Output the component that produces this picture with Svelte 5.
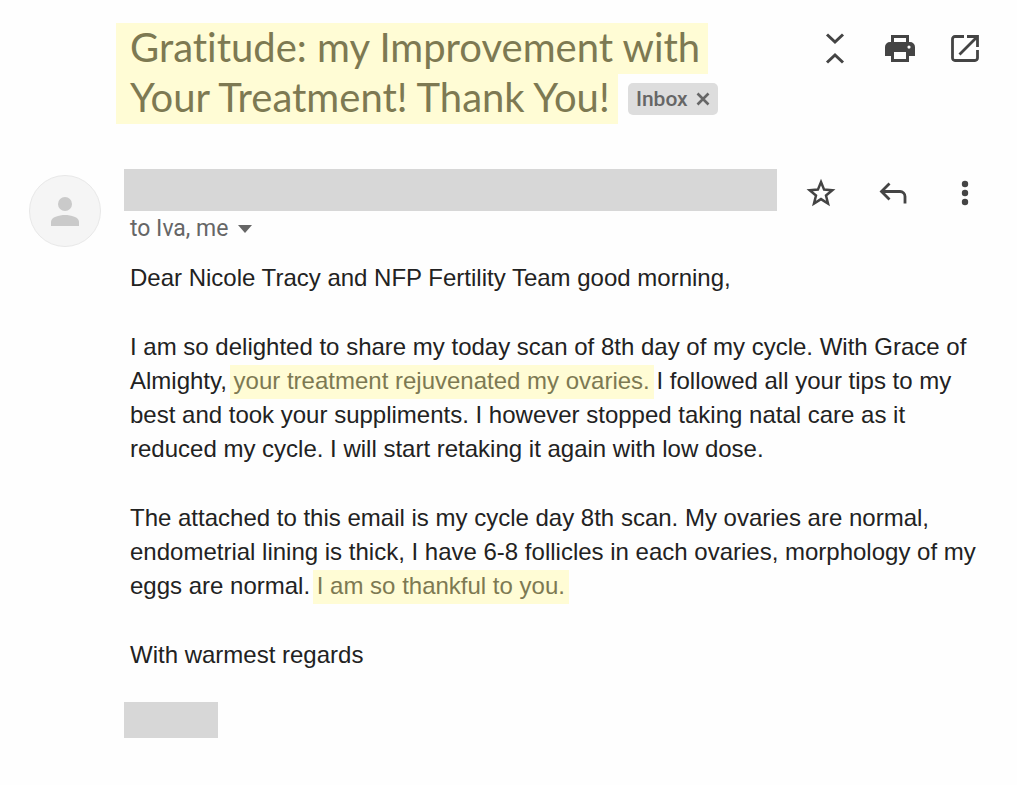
<script>
  let labelled = $state(true);
  let starred = $state(false);
</script>

<main class="mail">
  <header class="subject">
    <h1>
      <span class="mark title">Gratitude: my Improvement with Your Treatment! Thank You!</span>
      {#if labelled}
        <span class="label">Inbox
          <button type="button" aria-label="Remove Inbox label" onclick={() => (labelled = false)}>
            <svg width="14" height="14" viewBox="0 0 14 14"><path d="M1.500 1.500l11 11M12.500 1.500l-11 11" stroke="currentColor" stroke-width="2.600" /></svg>
          </button>
        </span>
      {/if}
    </h1>
    <div class="tools top">
      <button type="button" aria-label="Collapse all">
        <svg width="32" height="32" viewBox="0 0 32 32" fill="none" stroke="currentColor" stroke-width="3"><path d="M8 2.500l8 7.500 8-7.500M8 30.500l8-7.500 8 7.500" /></svg>
      </button>
      <button type="button" aria-label="Print">
        <svg width="32" height="32" viewBox="0 0 32 32">
          <path fill="currentColor" fill-rule="evenodd" d="M7 3h18v7h1a5 5 0 0 1 5 5v9h-6v6H7v-6H1v-9a5 5 0 0 1 5-5h1zM10 6v4h12V6zM10 20v7h12v-7zM25 13.500a1.600 1.600 0 1 0 0 3.200 1.600 1.600 0 0 0 0-3.200z" />
        </svg>
      </button>
      <button type="button" aria-label="Open in new window">
        <svg width="32" height="32" viewBox="0 0 32 32" fill="none" stroke="currentColor" stroke-width="2.800">
          <path d="M15 4.500H6A2.500 2.500 0 0 0 3.500 7v19A2.500 2.500 0 0 0 6 28.500h20a2.500 2.500 0 0 0 2.500-2.500v-8M18 4.500h10.500V15M28 5L10.500 22.500" />
        </svg>
      </button>
    </div>
  </header>

  <article class="message">
    <div class="avatar">
      <svg width="30" height="34" viewBox="0 0 30 34" fill="#cacaca" aria-hidden="true">
        <circle cx="15" cy="10" r="7" />
        <path d="M1 32v-4C1 23 9 21 15 21s14 2 14 7v4z" />
      </svg>
    </div>
    <div class="content">
      <div class="sender">
        <div class="who">
          <div class="redacted name"></div>
          <button type="button" class="recipients">to Iva, me
            <svg width="14" height="8" viewBox="0 0 14 8" aria-hidden="true"><path d="M0 0h14L7 8z" fill="currentColor" /></svg>
          </button>
        </div>
        <div class="tools actions">
          <button type="button" aria-label="Star" aria-pressed={starred} onclick={() => (starred = !starred)}>
            <svg width="32" height="32" viewBox="0 0 32 32" fill={starred ? 'currentColor' : 'none'} stroke="currentColor" stroke-width="2.500">
              <path d="M16 5l3.100 7.600 8.200.6-6.300 5.300 2 8-7-4.400-7 4.400 2-8-6.300-5.300 8.200-.6z" />
            </svg>
          </button>
          <button type="button" aria-label="Reply">
            <svg width="32" height="32" viewBox="0 0 32 32" fill="none" stroke="currentColor" stroke-width="2.800">
              <path d="M12.500 6.500L4.500 14.500l8 8M4.500 14.500H23a5 5 0 0 1 5 5V26.500" />
            </svg>
          </button>
          <button type="button" aria-label="More">
            <svg width="32" height="32" viewBox="0 0 32 32" fill="currentColor"><circle cx="16" cy="7" r="3.200" /><circle cx="16" cy="16" r="3.200" /><circle cx="16" cy="25" r="3.200" /></svg>
          </button>
        </div>
      </div>
      <div class="body">
        <p>Dear Nicole Tracy and NFP Fertility Team good morning,</p>
        <p>
          I am so delighted to share my today scan of 8th day of my cycle. With Grace of Almighty,
          <span class="mark">your treatment rejuvenated my ovaries.</span> I followed all your tips to my best and
          took your suppliments. I however stopped taking natal care as it reduced my cycle. I will start retaking it
          again with low dose.
        </p>
        <p>
          The attached to this email is my cycle day 8th scan. My ovaries are normal, endometrial lining is thick, I
          have 6-8 follicles in each ovaries, morphology of my eggs are normal.
          <span class="mark">I am so thankful to you.</span>
        </p>
        <p>With warmest regards</p>
      </div>
      <div class="redacted signature"></div>
    </div>
  </article>
</main>

<style>
  :global(body) {
    margin: 0;
    background: #fefefe;
  }
  .mail {
    padding: 22px 36px 44px 29px;
    font-family: "Liberation Sans", Arial, sans-serif;
    color: #222;
  }
  button {
    display: inline-flex;
    align-items: center;
    justify-content: center;
    padding: 0;
    border: 0;
    background: none;
    color: inherit;
    font: inherit;
    cursor: pointer;
  }
  .subject {
    display: flex;
    align-items: flex-start;
    justify-content: space-between;
    padding-left: 87px;
  }
  h1 {
    flex: 1;
    max-width: 640px;
    margin: 0;
    font: 400 40px/50px Lato, sans-serif;
    font-variant-ligatures: none;
  }
  .mark {
    padding: 2px 4px 5px;
    margin: 0 -4px;
    background: #fffcd5;
    color: #7d7952;
    -webkit-box-decoration-break: clone;
    box-decoration-break: clone;
  }
  .mark.title {
    margin: 0;
    padding: 0 8px 3px 14px;
  }
  .label {
    display: inline-flex;
    align-items: center;
    gap: 8px;
    height: 32px;
    margin-top: 11px;
    padding: 0 8px;
    border-radius: 5px;
    background: #ddd;
    color: #666;
    font: 500 21px/32px Roboto, sans-serif;
    vertical-align: top;
  }
  .tools {
    display: flex;
    color: #444;
  }
  .top {
    gap: 33px;
    padding-top: 10px;
  }
  .actions {
    gap: 40px;
    padding-top: 8px;
  }
  .message {
    display: flex;
    gap: 23px;
    margin-top: 47px;
  }
  .avatar {
    display: flex;
    flex: none;
    align-items: center;
    justify-content: center;
    box-sizing: border-box;
    width: 72px;
    height: 72px;
    margin-top: 6px;
    border: 1px solid #e8e8e8;
    border-radius: 50%;
    background: #f5f5f5;
  }
  .content {
    flex: 1;
    min-width: 0;
  }
  .sender {
    display: flex;
    align-items: flex-start;
    gap: 28px;
  }
  .who {
    flex: 1;
  }
  .redacted {
    background: #d7d7d7;
  }
  .name {
    height: 42px;
  }
  .recipients {
    gap: 10px;
    height: 36px;
    padding-left: 6px;
    color: #666;
    font: 400 23px/36px Roboto, sans-serif;
  }
  .body {
    padding: 14px 0 0 6px;
    font-size: 24px;
    line-height: 34px;
  }
  p {
    margin: 0 0 35px;
  }
  .signature {
    width: 94px;
    height: 36px;
    margin-top: -5px;
  }
</style>
